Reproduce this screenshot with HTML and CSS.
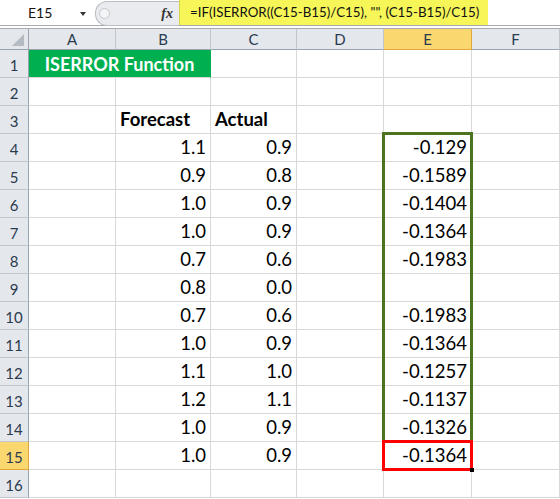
FILE: index.html
```html
<!DOCTYPE html>
<html lang="en">
<head>
    <meta charset="UTF-8">
    <title>ISERROR Function</title>
    <link rel="stylesheet" href="styles.css">
</head>
<body>
    <div class="formula-bar">
        <div class="name-box">E15<span class="arrow"></span></div>
        <div class="tools">
            <span class="knob"></span>
            <span class="fx">fx</span>
        </div>
        <div class="formula">=IF(ISERROR((C15-B15)/C15), "", (C15-B15)/C15)</div>
        <div class="rest"></div>
    </div>

    <div class="sheet">
        <div class="hd corner"><span class="tri"></span></div>
        <div class="hd col">A</div>
        <div class="hd col">B</div>
        <div class="hd col">C</div>
        <div class="hd col">D</div>
        <div class="hd col sel">E</div>
        <div class="hd col">F</div>

        <div class="hd row">1</div>
        <div class="c title">ISERROR Function</div>
        <div class="c"></div><div class="c"></div><div class="c"></div><div class="c"></div>

        <div class="hd row">2</div>
        <div class="c"></div><div class="c"></div><div class="c"></div><div class="c"></div><div class="c"></div><div class="c"></div>

        <div class="hd row">3</div>
        <div class="c"></div><div class="c bold">Forecast</div><div class="c bold">Actual</div><div class="c"></div><div class="c"></div><div class="c"></div>

        <div class="hd row">4</div>
        <div class="c"></div><div class="c num">1.1</div><div class="c num">0.9</div><div class="c"></div><div class="c num">-0.129</div><div class="c"></div>

        <div class="hd row">5</div>
        <div class="c"></div><div class="c num">0.9</div><div class="c num">0.8</div><div class="c"></div><div class="c num">-0.1589</div><div class="c"></div>

        <div class="hd row">6</div>
        <div class="c"></div><div class="c num">1.0</div><div class="c num">0.9</div><div class="c"></div><div class="c num">-0.1404</div><div class="c"></div>

        <div class="hd row">7</div>
        <div class="c"></div><div class="c num">1.0</div><div class="c num">0.9</div><div class="c"></div><div class="c num">-0.1364</div><div class="c"></div>

        <div class="hd row">8</div>
        <div class="c"></div><div class="c num">0.7</div><div class="c num">0.6</div><div class="c"></div><div class="c num">-0.1983</div><div class="c"></div>

        <div class="hd row">9</div>
        <div class="c"></div><div class="c num">0.8</div><div class="c num">0.0</div><div class="c"></div><div class="c num"></div><div class="c"></div>

        <div class="hd row">10</div>
        <div class="c"></div><div class="c num">0.7</div><div class="c num">0.6</div><div class="c"></div><div class="c num">-0.1983</div><div class="c"></div>

        <div class="hd row">11</div>
        <div class="c"></div><div class="c num">1.0</div><div class="c num">0.9</div><div class="c"></div><div class="c num">-0.1364</div><div class="c"></div>

        <div class="hd row">12</div>
        <div class="c"></div><div class="c num">1.1</div><div class="c num">1.0</div><div class="c"></div><div class="c num">-0.1257</div><div class="c"></div>

        <div class="hd row">13</div>
        <div class="c"></div><div class="c num">1.2</div><div class="c num">1.1</div><div class="c"></div><div class="c num">-0.1137</div><div class="c"></div>

        <div class="hd row">14</div>
        <div class="c"></div><div class="c num">1.0</div><div class="c num">0.9</div><div class="c"></div><div class="c num">-0.1326</div><div class="c"></div>

        <div class="hd row sel">15</div>
        <div class="c"></div><div class="c num">1.0</div><div class="c num">0.9</div><div class="c"></div><div class="c num">-0.1364</div><div class="c"></div>

        <div class="hd row">16</div>
        <div class="c"></div><div class="c"></div><div class="c"></div><div class="c"></div><div class="c"></div><div class="c"></div>

        <div class="range-box"></div>
        <div class="active-box"><span class="handle"></span></div>
    </div>
</body>
</html>
```

FILE: styles.css
```css
body {
    margin: 0;
    width: 560px;
    height: 499px;
    overflow: hidden;
    background: #fff;
    font-family: Lato, "Noto Sans", sans-serif;
}

/* Formula bar */
.formula-bar {
    display: flex;
    height: 25px;
    border-bottom: 1px solid #a7abb0;
    margin-bottom: 2px;
    background: #fff;
}
.name-box {
    position: relative;
    width: 67px;
    padding-left: 28px;
    font-size: 14px;
    line-height: 25px;
    color: #111;
}
.arrow {
    position: absolute;
    left: 80px;
    top: 12px;
    border-left: 3px solid transparent;
    border-right: 3px solid transparent;
    border-top: 4px solid #333;
}
.tools {
    display: flex;
    align-items: center;
    justify-content: space-between;
    width: 74px;
    padding: 0 6px 0 3px;
    margin-top: 1px;
    height: 23px;
    background: #e9ebee;
    border: 1px solid #b9bdc3;
    border-right: none;
    border-radius: 12px 0 0 12px;
}
.knob {
    width: 9px;
    height: 9px;
    border-radius: 50%;
    border: 1px solid #c4c7cc;
    background: #f4f5f6;
}
.fx {
    font-family: "Liberation Serif", serif;
    font-style: italic;
    font-weight: bold;
    font-size: 14px;
    color: #333;
}
.formula {
    width: 298px;
    padding-left: 10px;
    background: #f6f658;
    border-left: 1px solid #d5d545;
    font-size: 13.3px;
    line-height: 25px;
    color: #111;
    white-space: nowrap;
}
.rest {
    flex: 1;
}

/* Sheet grid */
.sheet {
    position: relative;
    display: grid;
    grid-template-columns: 29px 87px 95px 86px 87px 88px 88px;
    grid-template-rows: 21px repeat(16, 28px);
    border-top: 1px solid #a7abb0;
}
.hd {
    background: #e4e8ed;
    border-right: 1px solid #c1c7cf;
    border-bottom: 1px solid #c1c7cf;
    color: #2b3a4e;
    font-size: 15px;
    display: flex;
    align-items: center;
    justify-content: center;
}
.hd.col {
    border-bottom-color: #9aa4b1;
}
.hd.row {
    border-right-color: #9aa4b1;
    padding-top: 2px;
}
.hd.sel {
    background: #fbd86f;
    border-color: #e2a73c;
}
.corner {
    position: relative;
    border-bottom-color: #9aa4b1;
    border-right-color: #9aa4b1;
}
.tri {
    position: absolute;
    right: 4px;
    bottom: 3px;
    border-left: 12px solid transparent;
    border-bottom: 12px solid #b5bbc3;
}
.c {
    border-right: 1px solid #d9d9d9;
    border-bottom: 1px solid #d9d9d9;
    font-size: 18.5px;
    color: #000;
    display: flex;
    align-items: flex-end;
    padding: 0 4px 3px;
    white-space: nowrap;
}
.num {
    justify-content: flex-end;
}
.bold {
    font-weight: bold;
}
.title {
    grid-column: span 2;
    background: #00b050;
    color: #fff;
    font-size: 18px;
    font-weight: bold;
    justify-content: center;
    align-items: center;
    padding: 1px 0 0;
    border-right-color: #00b050;
}

/* Selection boxes, laid over the cells */
.range-box,
.active-box {
    position: absolute;
    grid-column: 6 / 7;
    inset: -2px -1px -1px -2px;
    border: 3px solid #4b7320;
    pointer-events: none;
}
.range-box {
    grid-row: 5 / 16;
}
.active-box {
    grid-row: 16 / 17;
    border-color: #ff0000;
}
.handle {
    position: absolute;
    right: -4px;
    bottom: -4px;
    width: 4px;
    height: 4px;
    background: #000;
}
```
